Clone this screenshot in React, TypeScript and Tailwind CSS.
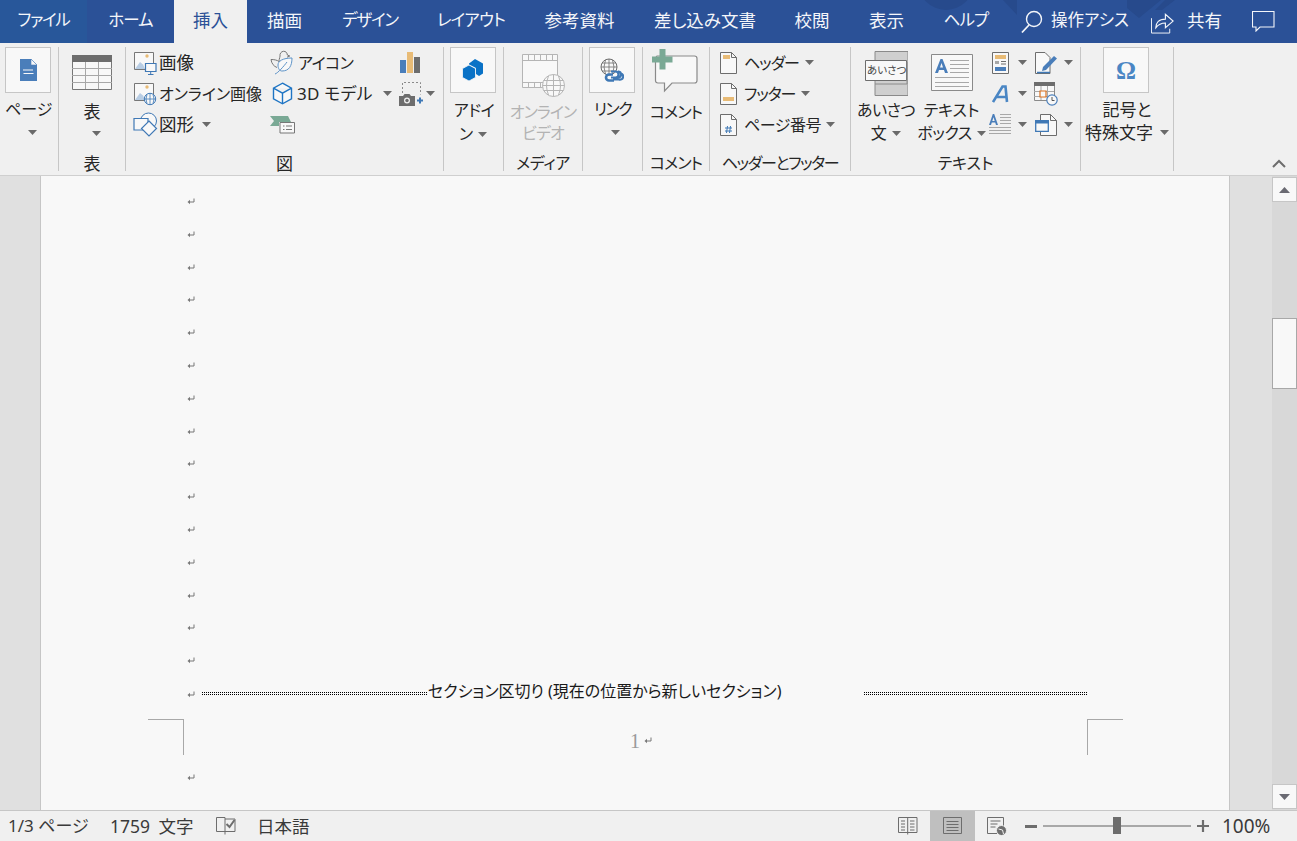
import type { ReactNode } from "react";

const ic = "shrink-0 block";

function Caret({ className = "" }: { className?: string }) {
  return (
    <svg width="9" height="5" viewBox="0 0 9 5" className={`${ic} ${className}`}>
      <path d="M0 0h9L4.500 5z" fill="#6a6a6a" />
    </svg>
  );
}

function ReturnMark() {
  return (
    <svg width="8" height="8" viewBox="0 0 8 8" className={ic}>
      <path d="M7 0.500v3.500H2" fill="none" stroke="#777" />
      <path d="M0.500 4L3 1.800v4.400z" fill="#777" />
    </svg>
  );
}

function PictureBase({ children }: { children: ReactNode }) {
  return (
    <svg width="24" height="24" viewBox="0 0 24 24" className={ic}>
      <path d="M1.500 1.500h19v17h-19z" fill="#f8f8f8" stroke="#777" />
      <path d="M2 18l5-7 3 2.500 2 4.500z" fill="#b8cde4" />
      <circle cx="14" cy="5" r="1.700" fill="#e8bb76" />
      {children}
    </svg>
  );
}

function PictureIcon() {
  return (
    <PictureBase>
      <path d="M12.500 12.500h10.500v8h-10.500z" fill="#f8f8f8" stroke="#3f78b5" strokeWidth="1.200" />
      <path d="M17.700 20.500v2.500M15 23.500h5.500" stroke="#3f78b5" />
    </PictureBase>
  );
}

function OnlinePictureIcon() {
  return (
    <PictureBase>
      <circle cx="17" cy="17" r="5.700" fill="#f8f8f8" stroke="#3f78b5" />
      <path d="M11.500 17h11M17 11.500v11M14 12.500q-2 4.500 0 9M20 12.500q2 4.500 0 9" fill="none" stroke="#3f78b5" strokeWidth=".8" />
    </PictureBase>
  );
}

function ShapesIcon() {
  return (
    <svg width="25" height="25" viewBox="0 0 25 25" className={ic}>
      <circle cx="15.500" cy="9" r="8" fill="#f8f8f8" stroke="#3f78b5" />
      <path d="M1 6.500h14v11.500H1z" fill="#f8f8f8" stroke="#3f78b5" strokeWidth="1.200" />
      <path d="M16 9l7.500 7.500L16 24l-7.500-7.500z" fill="#f8f8f8" stroke="#3f78b5" strokeWidth="1.200" />
    </svg>
  );
}

function DuckIcon() {
  return (
    <svg width="24" height="25" viewBox="0 0 24 25" className={ic}>
      <path d="M1 9.500c3 0 6 .5 8 2 0-3 1.500-5 1-7C10.500 2 13 .7 15 1.500c1.500.5 2.300 2 2.300 3.500l2.500 1-2.800 1.200" fill="none" stroke="#777" />
      <path d="M1 9.500c.5 4 3 7 6 8" fill="none" stroke="#777" />
      <path d="M8 15c0-4 5-7 14-7 0 8-3 13-10 13-2 0-4-2-4-6z" fill="#f8f8f8" stroke="#5d93c8" />
      <path d="M5 24c3-1 9-8 12-12" fill="none" stroke="#5d93c8" />
    </svg>
  );
}

function CubeIcon() {
  return (
    <svg width="21" height="23" viewBox="0 0 21 23" className={ic}>
      <path d="M10.500 1.200l9 5v10.600l-9 5-9-5V6.200zM1.500 6.200l9 5 9-5M10.500 11.200v10.600" fill="#f8f8f8" stroke="#1f75c4" strokeWidth="1.400" />
    </svg>
  );
}

function ScreenshotFlagIcon() {
  return (
    <svg width="25" height="19" viewBox="0 0 25 19" className={ic}>
      <path d="M0 1h18l3 6H9v4H0l4-5z" fill="#7aa995" />
      <path d="M10 7.500h14.500v10.500H10z" fill="#f8f8f8" stroke="#777" />
      <path d="M13 11h1.500M16 11h6M13 14.500h1.500M16 14.500h6" stroke="#777" />
    </svg>
  );
}

function ChartIcon() {
  return (
    <svg width="20" height="21" viewBox="0 0 20 21" className={ic}>
      <path d="M0 8h6v13H0z" fill="#4a7eba" />
      <path d="M7 0h6v21H7z" fill="#e8bb76" />
      <path d="M14 5h6v16h-6z" fill="#6d6d6d" />
    </svg>
  );
}

function CameraIcon() {
  return (
    <svg width="24" height="24" viewBox="0 0 24 24" className={ic}>
      <path d="M3.500 11V.5h18v12" fill="none" stroke="#8a8a8a" strokeDasharray="2 2" />
      <path d="M0 14h4l1.500-2h5l1.500 2h4v10H0z" fill="#6d6d6d" />
      <circle cx="8" cy="18.500" r="3" fill="#f0f0f0" />
      <circle cx="8" cy="18.500" r="1.700" fill="#6d6d6d" />
      <path d="M21 15.500v6M18 18.500h6" stroke="#3f78b5" strokeWidth="2" />
    </svg>
  );
}

function PageBlueIcon() {
  return (
    <svg width="17" height="22" viewBox="0 0 17 22" className={ic}>
      <path d="M0 0h11l6 6v16H0z" fill="#4a7eba" />
      <path d="M11 0l6 6h-6z" fill="#f8f8f8" stroke="#4a7eba" strokeWidth=".6" />
      <path d="M3.500 11h10" stroke="#f8f8f8" strokeWidth="2" strokeDasharray="1 1" />
      <path d="M3.500 14.500h10" stroke="#f8f8f8" />
    </svg>
  );
}

function TableIcon() {
  return (
    <svg width="40" height="35" viewBox="0 0 40 35" className={ic}>
      <path d="M.5.500h39v34H.5z" fill="#f8f8f8" stroke="#777" />
      <path d="M0 0h40v7H0z" fill="#6d6d6d" />
      <path d="M13.500 7v27M26.500 7v27M0 13.500h40M0 20.500h40M0 27.500h40" stroke="#a8a8a8" />
    </svg>
  );
}

function AddinIcon() {
  return (
    <svg width="22" height="22" viewBox="0 0 22 22" className={ic}>
      <path d="M13 0l8 4.500v10L17 17l-3-2V9L7 5.500V4.500z" fill="#0a72c6" />
      <path d="M7 6l6.500 3.500v9L7 22 .5 18.500v-9z" fill="#0a72c6" stroke="#f8f8f8" strokeWidth=".8" />
    </svg>
  );
}

function VideoIcon() {
  return (
    <svg width="43" height="43" viewBox="0 0 43 43" className={ic}>
      <path d="M.5.500h35v33H.5z" fill="#f8f8f8" stroke="#b5b5b5" />
      <path d="M.5 6.500h35M.5 28.500h35M6.500 1v5M12.500 1v5M18.500 1v5M24.500 1v5M30.500 1v5M6.500 29v5M12.500 29v5M18.500 29v5" stroke="#b5b5b5" />
      <circle cx="31.500" cy="31.500" r="11" fill="#f8f8f8" stroke="#b5b5b5" />
      <path d="M20.500 31.500h22M31.500 20.500v22M21.500 26.500h20M21.500 36.500h20M26.500 22q-4 9.500 0 19M36.500 22q4 9.500 0 19" fill="none" stroke="#b5b5b5" />
    </svg>
  );
}

function LinkIcon() {
  return (
    <svg width="24" height="24" viewBox="0 0 24 24" className={ic}>
      <circle cx="9" cy="9" r="8" fill="#f8f8f8" stroke="#6d6d6d" />
      <path d="M1 9h16M9 1v16M2 5h14M2 13h14M5.500 2q-3 7 0 14M12.500 2q3 7 0 14" fill="none" stroke="#6d6d6d" strokeWidth=".8" />
      <path d="M13 16.500h-4a3 3 0 0 0 0 6h5" fill="none" stroke="#3f78b5" strokeWidth="2.600" />
      <path d="M11 19.500h4.500a3 3 0 0 0 0-6H11M19 13.500h-1a3 3 0 0 1 0 6h-3M21 15.500a3 3 0 0 1-2 6h-6" fill="none" stroke="#3f78b5" strokeWidth="2.200" />
    </svg>
  );
}

function CommentIcon() {
  return (
    <svg width="46" height="46" viewBox="0 0 46 46" className={ic}>
      <path d="M5 7h37.500q2.500 0 2.500 2.500v22q0 2.500-2.500 2.500H20l-7.500 8v-8H6q-2.500 0-2.500-2.500V9z" fill="#f8f8f8" stroke="#8a8a8a" strokeWidth="1.200" />
      <path d="M7.500 0h6v7.500H20.500v6h-7v7h-6v-7H0v-6h7.500z" fill="#7aa995" />
    </svg>
  );
}

function HeaderDocIcon({ kind }: { kind: "head" | "foot" | "num" }) {
  return (
    <svg width="17" height="22" viewBox="0 0 17 22" className={ic}>
      <path d="M.5.500h11l5 5v16H.5z" fill="#f8f8f8" stroke="#6d6d6d" />
      <path d="M11.500.500v5h5" fill="none" stroke="#6d6d6d" />
      {kind === "head" && <path d="M3 3h7v4H3z" fill="#e8bb76" />}
      {kind === "foot" && <path d="M3 14h11v4H3z" fill="#e8bb76" />}
      {kind === "num" && <path d="M7.500 12l-1 7M10.500 12l-1 7M5 14h7M5 17h7" stroke="#3f78b5" fill="none" />}
    </svg>
  );
}

function GreetingIcon() {
  return (
    <svg width="44" height="45" viewBox="0 0 44 45" className={ic}>
      <path d="M11 .500h33v44H11z" fill="#cfcfcf" stroke="#8a8a8a" />
      <path d="M1.500 9.500h41v20h-41z" fill="#f8f8f8" stroke="#6d6d6d" />
      <path d="M43 11v22H11" fill="none" stroke="#8a8a8a" />
    </svg>
  );
}

function TextBoxIcon() {
  return (
    <svg width="42" height="37" viewBox="0 0 42 37" className={ic}>
      <path d="M.5.500h41v36H.5z" fill="#f8f8f8" stroke="#8a8a8a" />
      <path d="M4 19L9.500 5h2L17 19h-3l-1-3H8l-1 3zM9 13.500h3l-1.500-4.500z" fill="#4a7eba" />
      <path d="M19 6.500h19M19 10.500h19M19 14.500h19M19 18.500h19M4 23.500h34M4 28.500h34M4 32.500h34" stroke="#a8a8a8" />
    </svg>
  );
}

function QuickPartsIcon() {
  return (
    <svg width="17" height="22" viewBox="0 0 17 22" className={ic}>
      <path d="M.5.500h16v21H.5z" fill="#f8f8f8" stroke="#6d6d6d" />
      <path d="M3 3h11v4H3z" fill="#e8bb76" />
      <path d="M3 9h4v3H3z" fill="#a8a8a8" />
      <path d="M9 9.500h5M9 12h5" stroke="#6d6d6d" />
      <path d="M3 15h11v4H3z" fill="#4a7eba" />
    </svg>
  );
}

function SignatureIcon() {
  return (
    <svg width="23" height="22" viewBox="0 0 23 22" className={ic}>
      <path d="M.5.500h9.500l5 5v16H.5z" fill="#f8f8f8" stroke="#6d6d6d" />
      <path d="M8 15L19 4l3 2.500L11 18l-4 1z" fill="#4a7eba" />
      <path d="M2 20.500h13" stroke="#3f78b5" strokeWidth="1.500" />
    </svg>
  );
}

function CalendarIcon() {
  return (
    <svg width="24" height="24" viewBox="0 0 24 24" className={ic}>
      <path d="M.5.500h20v18H.5z" fill="#f8f8f8" stroke="#8a8a8a" />
      <path d="M0 0h21v4H0z" fill="#6d6d6d" />
      <path d="M7 4v14M13.500 4v14M0 9.500h20M0 14.500h20" stroke="#a8a8a8" />
      <path d="M6 9h6v6H6z" fill="#f8f8f8" stroke="#d9701e" strokeWidth="1.200" />
      <circle cx="18" cy="18" r="5.200" fill="#f8f8f8" stroke="#4a7eba" strokeWidth="1.200" />
      <path d="M18 15v3.500h2.500" fill="none" stroke="#555" />
    </svg>
  );
}

function DropCapIcon() {
  return (
    <svg width="23" height="23" viewBox="0 0 23 23" className={ic}>
      <path d="M0 12L3.800 1h1.400L9 12H7l-.8-2.500H2.800L2 12zM3.300 8h2.400L4.500 4.300z" fill="#4a7eba" />
      <path d="M11 1.500h11M11 4.500h11M11 7.500h11M11 10.500h11M0 14.500h22M0 17.500h22M0 20.500h22" stroke="#a8a8a8" />
    </svg>
  );
}

function ObjectIcon() {
  return (
    <svg width="22" height="22" viewBox="0 0 22 22" className={ic}>
      <path d="M5.500.500h10l6 6v15h-16z" fill="#f8f8f8" stroke="#6d6d6d" />
      <path d="M15.500.500v6h6" fill="none" stroke="#6d6d6d" />
      <path d="M.7 6.700h12.600v10.600H.7z" fill="#f8f8f8" stroke="#3f78b5" strokeWidth="1.300" />
      <path d="M0 6h14v3.500H0z" fill="#3f78b5" />
    </svg>
  );
}

function WordArtIcon() {
  return (
    <svg width="17" height="18" viewBox="0 0 17 18" className={ic}>
      <path d="M1 17L10.500 1.500h3L15 17M5 12h9.500" fill="none" stroke="#4a86c4" strokeWidth="2.600" />
    </svg>
  );
}

function LargeBtn({ children }: { children: ReactNode }) {
  return (
    <div className="w-[46px] h-[46px] flex items-center justify-center bg-[#f8f8f8] border border-[#c6c6c6]">
      {children}
    </div>
  );
}

function Group({ w, label, labelClass = "", children }: { w: string; label?: string; labelClass?: string; children: ReactNode }) {
  return (
    <div className={`${w} shrink-0 h-[124px] border-r border-[#c6c6c6] flex flex-col`}>
      <div className="flex-1 min-h-0">{children}</div>
      {label && (
        <div className={`h-[19px] mb-[-2px] text-center text-[16px] leading-[19px] whitespace-nowrap ${labelClass}`}>{label}</div>
      )}
    </div>
  );
}

function SmallRow({
  icon,
  text,
  caret,
  iconBox = "w-[26px]",
  textClass = "ml-[1px] text-[16px]",
  caretClass = "ml-[7px]",
}: {
  icon: ReactNode;
  text?: string;
  caret?: boolean;
  iconBox?: string;
  textClass?: string;
  caretClass?: string;
}) {
  return (
    <div className="h-[31px] flex items-center whitespace-nowrap">
      <div className={`${iconBox} flex justify-center shrink-0`}>{icon}</div>
      {text && <span className={textClass}>{text}</span>}
      {caret && <Caret className={caretClass} />}
    </div>
  );
}

const tabs = [
  { t: "ファイル", w: "w-[87px]", c: "bg-[#28579a] tracking-[-1.300px]" },
  { t: "ホーム", w: "w-[87px]", c: "tracking-[-1px]" },
  { t: "挿入", w: "w-[73px]", c: "bg-[#f0f0f0] text-[#2b5197] text-[17.500px]" },
  { t: "描画", w: "w-[75px]", c: "text-[17.500px]" },
  { t: "デザイン", w: "w-[96px]", c: "tracking-[-1.200px]" },
  { t: "レイアウト", w: "w-[106px]", c: "tracking-[-.8px]" },
  { t: "参考資料", w: "w-[111px]", c: "text-[17.500px]" },
  { t: "差し込み文書", w: "w-[140px]", c: "text-[17.500px]" },
  { t: "校閲", w: "w-[74px]", c: "text-[17.500px]" },
  { t: "表示", w: "w-[75px]", c: "text-[17.500px]" },
  { t: "ヘルプ", w: "w-[84px]", c: "tracking-[-.8px]" },
];

function TitleBar() {
  return (
    <div className="relative h-[43px] bg-[#2b5197] text-[#f4f6fa] flex text-[16.500px]">
      <svg width="260" height="18" viewBox="0 0 260 18" className="absolute left-[915px] top-0">
        <circle cx="31" cy="-18" r="28" fill="#274a8c" />
        <path d="M88 0h14v15zM212 0h34l-22 18-12-10zM240 10l10-10h10l-13 10z" fill="#274a8c" />
      </svg>
      {tabs.map((x) => (
        <div key={x.t} className={`relative ${x.w} h-full flex items-center justify-center whitespace-nowrap pb-[2px] ${x.c}`}>
          {x.t}
        </div>
      ))}
      <div className="relative flex items-center pb-[2px]">
        <svg width="22" height="24" viewBox="0 0 22 24" className="ml-[13px] mt-[2px]">
          <circle cx="13" cy="9" r="7.500" fill="none" stroke="#f4f6fa" strokeWidth="1.400" />
          <path d="M8 15L1 22.500" stroke="#f4f6fa" strokeWidth="1.800" />
        </svg>
        <span className="ml-[8px] w-[80px] whitespace-nowrap">操作アシス</span>
        <svg width="24" height="23" viewBox="0 0 25 23" className="ml-[20px] mt-[4px]">
          <path d="M.5 7v15.500h19V18" fill="none" stroke="#f4f6fa" />
          <path d="M5 17c0-5 3-9 10-9V3l8 7-8 7v-5c-4 0-7 1-10 5z" fill="none" stroke="#f4f6fa" strokeWidth="1.200" />
        </svg>
        <span className="ml-[12px] whitespace-nowrap text-[17.500px]">共有</span>
        <svg width="23" height="21" viewBox="0 0 23 21" className="ml-[30px] mt-[2px]">
          <path d="M.5.500h21.500v15.500H8l-4 4v-4H.5z" fill="none" stroke="#f4f6fa" strokeWidth="1.100" />
        </svg>
      </div>
    </div>
  );
}

function Ribbon() {
  return (
    <div className="h-[133px] bg-[#f0f0f0] border-b border-[#cfcfcf] pt-[4px] flex text-[#262626]">
      <Group w="w-[59px]">
        <div className="pl-[5px]">
          <LargeBtn><PageBlueIcon /></LargeBtn>
          <div className="w-[46px] text-center mt-[5px] text-[16px] leading-[23px] whitespace-nowrap">ページ</div>
          <Caret className="ml-[23px] mt-[9px]" />
        </div>
      </Group>
      <Group w="w-[67px]" label="表" labelClass="text-[17px]">
        <div className="flex flex-col items-center pt-[8px]">
          <TableIcon />
          <div className="mt-[10px] text-[17px] leading-[23px]">表</div>
          <Caret className="mt-[8px] ml-[8px]" />
        </div>
      </Group>
      <Group w="w-[318px]" label="図" labelClass="text-[17px]">
        <div className="flex pl-[6px]">
          <div className="w-[137px]">
            <SmallRow icon={<PictureIcon />} text="画像" textClass="ml-[1px] text-[17.500px]" />
            <SmallRow icon={<OnlinePictureIcon />} text="オンライン画像" textClass="ml-[1px] text-[16px]" />
            <SmallRow icon={<ShapesIcon />} text="図形" textClass="ml-[1px] text-[17.500px]" caretClass="ml-[8px]" caret />
          </div>
          <div className="w-[130px]">
            <SmallRow icon={<DuckIcon />} text="アイコン" textClass="ml-[3px] text-[16px] tracking-[-.6px]" />
            <SmallRow icon={<CubeIcon />} text="3D モデル" textClass="ml-[2px] text-[17px] tracking-[.2px]" caretClass="ml-[10px]" caret />
            <SmallRow icon={<ScreenshotFlagIcon />} />
          </div>
          <div>
            <SmallRow icon={<ChartIcon />} iconBox="w-[22px]" />
            <SmallRow icon={<CameraIcon />} iconBox="w-[24px]" caretClass="ml-[3px]" caret />
          </div>
        </div>
      </Group>
      <Group w="w-[60px]">
        <div className="flex flex-col items-center pr-[1px]">
          <LargeBtn><AddinIcon /></LargeBtn>
          <div className="mt-[5px] text-center text-[16px] leading-[24px] whitespace-nowrap">
            <span className="pl-[2px] tracking-[-.5px]">アドイ</span>
            <div className="flex items-center justify-center">ン<Caret className="ml-[5px]" /></div>
          </div>
        </div>
      </Group>
      <Group w="w-[79px]" label="メディア" labelClass="tracking-[-.3px]">
        <div className="flex flex-col items-center pt-[7px] text-[#b3b3b3]">
          <VideoIcon />
          <div className="mt-[5px] text-center text-[16px] leading-[21px] tracking-[-.9px] whitespace-nowrap">オンライン<br />ビデオ</div>
        </div>
      </Group>
      <Group w="w-[60px]">
        <div className="flex flex-col items-center pr-[2px]">
          <LargeBtn><LinkIcon /></LargeBtn>
          <div className="mt-[5px] pl-[2px] text-[16px] leading-[23px] tracking-[-1.500px] whitespace-nowrap">リンク</div>
          <Caret className="mt-[9px] ml-[8px]" />
        </div>
      </Group>
      <Group w="w-[67px]" label="コメント" labelClass="tracking-[-.8px]">
        <div className="flex flex-col items-center pt-[2px]">
          <div className="pr-[3px]"><CommentIcon /></div>
          <div className="mt-[6px] text-[16px] leading-[23px] tracking-[-.8px] whitespace-nowrap">コメント</div>
        </div>
      </Group>
      <Group w="w-[141px]" label="ヘッダーとフッター" labelClass="tracking-[-1.400px]">
        <div className="pl-[10px]">
          <SmallRow iconBox="w-[17px]" icon={<HeaderDocIcon kind="head" />} text="ヘッダー" textClass="ml-[7px] text-[16px] tracking-[-1.100px]" caretClass="ml-[6px]" caret />
          <SmallRow iconBox="w-[17px]" icon={<HeaderDocIcon kind="foot" />} text="フッター" textClass="ml-[7px] text-[16px] tracking-[-1.100px]" caretClass="ml-[6px]" caret />
          <SmallRow iconBox="w-[17px]" icon={<HeaderDocIcon kind="num" />} text="ページ番号" textClass="ml-[7px] text-[16px] tracking-[-.5px]" caretClass="ml-[5px]" caret />
        </div>
      </Group>
      <Group w="w-[230px]" label="テキスト">
        <div className="flex pl-[5px]">
          <div className="w-[60px] flex flex-col items-center pt-[4px]">
            <div className="relative">
              <GreetingIcon />
              <span className="absolute left-[3px] top-[10px] w-[38px] text-center text-[10.500px] leading-[18px] text-[#444] whitespace-nowrap">あいさつ</span>
            </div>
            <div className="mt-[3px] text-center text-[16px] leading-[23px] tracking-[-.5px] whitespace-nowrap">
              あいさつ
              <div className="flex items-center justify-center">文<Caret className="ml-[6px]" /></div>
            </div>
          </div>
          <div className="w-[71px] flex flex-col items-center pt-[7px]">
            <TextBoxIcon />
            <div className="mt-[8px] text-center text-[16px] leading-[23px] whitespace-nowrap">
              テキスト
              <div className="flex items-center justify-center tracking-[-.5px]">ボックス<Caret className="ml-[5px]" /></div>
            </div>
          </div>
          <div className="w-[47px] pl-[1px]">
            <SmallRow iconBox="w-[24px]" icon={<QuickPartsIcon />} caretClass="ml-[6px]" caret />
            <SmallRow iconBox="w-[24px]" icon={<WordArtIcon />} caretClass="ml-[6px]" caret />
            <SmallRow iconBox="w-[24px]" icon={<DropCapIcon />} caretClass="ml-[6px]" caret />
          </div>
          <div>
            <SmallRow iconBox="w-[24px]" icon={<SignatureIcon />} caretClass="ml-[6px]" caret />
            <SmallRow iconBox="w-[24px]" icon={<CalendarIcon />} />
            <SmallRow iconBox="w-[24px]" icon={<ObjectIcon />} caretClass="ml-[6px]" caret />
          </div>
        </div>
      </Group>
      <Group w="w-[93px]">
        <div className="flex flex-col items-center">
          <div className="pr-[2px]">
            <LargeBtn>
              <span className="font-['Liberation_Serif',serif] font-bold text-[25px] leading-none text-[#4a86c4]">Ω</span>
            </LargeBtn>
          </div>
          <div className="mt-[5px] text-center text-[17px] leading-[23px] whitespace-nowrap">
            記号と
            <div className="flex items-center justify-center">特殊文字<Caret className="ml-[7px]" /></div>
          </div>
        </div>
      </Group>
      <div className="flex-1 flex items-end justify-end pr-[11px] pb-[7px]">
        <svg width="14" height="9" viewBox="0 0 14 9" className={ic}>
          <path d="M1 8l6-6 6 6" fill="none" stroke="#6d6d6d" strokeWidth="2" />
        </svg>
      </div>
    </div>
  );
}

const markRows = Array.from({ length: 15 }, (_, i) => i);

function Page() {
  return (
    <div className="flex-1 h-full bg-[#f8f8f8] border-l border-r border-[#c6c6c6] overflow-hidden pt-[9px]">
      {markRows.map((i) => (
        <div key={i} className="h-[32.800px] pl-[146px] flex items-start pt-[13px]">
          <ReturnMark />
        </div>
      ))}
      <div className="h-[26px] pl-[146px] flex items-start">
        <div className="mt-[14px]"><ReturnMark /></div>
        <div className="ml-[7px] mt-[15.500px] w-[225px] h-[3px] border-y border-dotted border-black" />
        <span className="ml-[1px] mt-[2px] w-[436px] text-[16px] leading-[24px] text-[#1a1a1a] whitespace-nowrap">
          セクション区切り (現在の位置から新しいセクション)
        </span>
        <div className="mt-[15.500px] w-[223px] h-[3px] border-y border-dotted border-black" />
      </div>
      <div className="h-[36px] flex mt-[16px] pl-[107px]">
        <div className="w-[36px] h-full border-t border-r border-[#a8a8a8]" />
        <div className="w-[903px] pl-[446px] flex items-center gap-[4px] pt-[9px]">
          <span className="font-['Liberation_Serif',serif] text-[20px] text-[#9a9a9a] leading-none">1</span>
          <ReturnMark />
        </div>
        <div className="w-[36px] h-full border-t border-l border-[#a8a8a8]" />
      </div>
      <div className="pl-[146px] pt-[19px]">
        <ReturnMark />
      </div>
    </div>
  );
}

function ScrollArrow({ up }: { up?: boolean }) {
  return (
    <div className="h-[25px] bg-[#f8f8f8] border border-[#c6c6c6] flex items-center justify-center">
      <svg width="11" height="6" viewBox="0 0 11 6" className={ic}>
        <path d={up ? "M0 6h11L5.500 0z" : "M0 0h11L5.500 6z"} fill="#6a6a72" />
      </svg>
    </div>
  );
}

function StatusIcon({ children, w = 21 }: { children: ReactNode; w?: number }) {
  return (
    <svg width={w} height="20" viewBox={`0 0 ${w} 20`} className={ic} fill="none" stroke="#6d6d6d">
      {children}
    </svg>
  );
}

function StatusBar() {
  return (
    <div className="h-[31px] bg-[#f0f0f0] border-t border-[#c6c6c6] flex items-center text-[#3a3a3a] text-[17px] whitespace-nowrap">
      <span className="ml-[8px] w-[102px]">1/3 ページ</span>
      <span className="w-[106px] text-[17.500px] [word-spacing:4px]">1759 文字</span>
      <StatusIcon>
        <path d="M.5 1.500h8.500v14H.5zM9 3h10v12.500H9M9 15.500v3" />
        <path d="M10.500 8l3 3 5-7" stroke="#6d6d6d" strokeWidth="2" />
      </StatusIcon>
      <span className="ml-[20px] text-[17.500px]">日本語</span>
      <div className="flex-1" />
      <StatusIcon>
        <path d="M.5 1.500h18.500v15H.5zM9.700 1.500v17M3 5h4M3 8h4M3 11h4M3 14h4M12 5h4.500M12 8h4.500M12 11h4.500M12 14h4.500" />
      </StatusIcon>
      <div className="ml-[11px] w-[45px] h-[30px] bg-[#bfbfbf] flex items-center justify-center">
        <StatusIcon w={19}>
          <path d="M.5 1.500h18v16H.5zM3.500 5.500h12M3.500 8.500h12M3.500 11.500h12M3.500 14.500h12" />
        </StatusIcon>
      </div>
      <div className="ml-[12px]">
        <StatusIcon>
          <path d="M.5 1.500h16v16H.5zM3.500 5h10M3.500 8h7M3.500 11h5" />
          <circle cx="14.500" cy="14.500" r="5" fill="#6d6d6d" stroke="#f0f0f0" />
          <path d="M11.500 13l4 1 1 4" stroke="#f0f0f0" />
        </StatusIcon>
      </div>
      <div className="ml-[17px] w-[12px] h-[3px] bg-[#6d6d6d]" />
      <div className="ml-[6px] w-[148px] h-[2px] bg-[#a8a8a8] relative">
        <div className="absolute left-[70px] top-[-8px] w-[8px] h-[17px] bg-[#6d6d6d]" />
      </div>
      <svg width="12" height="12" viewBox="0 0 12 12" className={`${ic} ml-[6px]`}>
        <path d="M6 0v12M0 6h12" stroke="#6d6d6d" strokeWidth="2.200" />
      </svg>
      <span className="ml-[13px] w-[50px] text-[19px] text-[#3a3a3a]">100%</span>
      <div className="w-[25px]" />
    </div>
  );
}

export default function App() {
  return (
    <div className="w-[1297px] h-[841px] overflow-hidden flex flex-col bg-[#f0f0f0] font-['Noto_Sans','Noto_Sans_CJK_JP',sans-serif] [font-feature-settings:'palt']">
      <TitleBar />
      <Ribbon />
      <div className="h-[634px] flex overflow-hidden">
        <div className="w-[40px] h-full bg-[#e0e0e0]" />
        <Page />
        <div className="w-[42px] h-full bg-[#e0e0e0]" />
        <div className="w-[25px] h-full bg-[#d8d8d8] flex flex-col pt-[1px] pb-[1px]">
          <ScrollArrow up />
          <div className="mt-[116px] h-[71px] bg-[#f8f8f8] border border-[#a8a8a8]" />
          <div className="flex-1" />
          <ScrollArrow />
        </div>
      </div>
      <StatusBar />
    </div>
  );
}
